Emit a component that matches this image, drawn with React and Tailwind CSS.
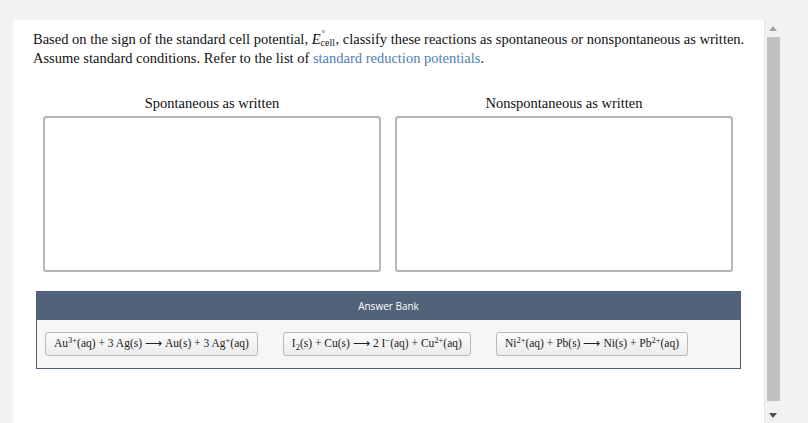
import React from "react";

const serif = { fontFamily: '"Liberation Serif", "Times New Roman", serif' };

// Chemical charge and subscript helpers; preflight supplies the vertical offsets.
function Sup({ children }) {
  return <sup className="text-[8.5px]">{children}</sup>;
}
function Sub({ children }) {
  return <sub className="text-[8.5px]">{children}</sub>;
}

function Tile({ children }) {
  return (
    <div className="h-[24px] px-[8px] flex items-center border border-[#b9b9b9] rounded-[3px] bg-gradient-to-b from-[#fbfbfb] to-[#ececec] text-[11.5px] text-[#222] whitespace-nowrap" style={serif}>
      <span>{children}</span>
    </div>
  );
}

const Arrow = () => <span className="mx-[3px]">⟶</span>;

function DropBox({ label }) {
  return (
    <div className="flex flex-col items-center w-[338px]">
      <div className="text-[14.5px] leading-[18px] text-[#111] h-[22px]" style={serif}>{label}</div>
      <div className="w-[338px] h-[156px] border-2 border-[#b5b5b5] rounded-[3px] bg-white" />
    </div>
  );
}

export default function App() {
  return (
    <div className="w-[808px] h-[423px] bg-[#f2f2f2] overflow-hidden flex pt-[20px] pl-[13px]">
      <div className="w-[751px] h-[403px] bg-white">
        <div className="pl-[20px] pr-[6px] pt-[10px] text-[14.5px] leading-[19px] text-[#111]" style={serif}>
          <p>
            Based on the sign of the standard cell potential,{" "}
            <i>E</i>
            <span className="relative inline-block w-[15px] h-[10px]">
              <span className="absolute left-[1px] -top-[5px] text-[9px] leading-none">°</span>
              <span className="absolute left-0 top-[4px] text-[10px] leading-none">cell</span>
            </span>
            , classify these reactions as spontaneous or nonspontaneous as written.
          </p>
          <p>
            Assume standard conditions. Refer to the list of{" "}
            <span className="text-[#4f7fb5]">standard reduction potentials</span>.
          </p>
        </div>

        <div className="flex gap-[14px] pl-[30px] mt-[26px]">
          <DropBox label="Spontaneous as written" />
          <DropBox label="Nonspontaneous as written" />
        </div>

        <div className="ml-[23px] mt-[19px] w-[705px] border border-[#4f6078]">
          <div className="h-[28px] bg-[#516279] flex items-center justify-center text-white text-[10px]" style={{ fontFamily: '"Open Sans", "Noto Sans", sans-serif' }}>
            Answer Bank
          </div>
          <div className="bg-[#f6f6f6] flex gap-[25px] px-[8px] py-[12px]">
            <Tile>
              Au<Sup>3+</Sup>(aq) + 3 Ag(s)<Arrow />Au(s) + 3 Ag<Sup>+</Sup>(aq)
            </Tile>
            <Tile>
              I<Sub>2</Sub>(s) + Cu(s)<Arrow />2 I<Sup>−</Sup>(aq) + Cu<Sup>2+</Sup>(aq)
            </Tile>
            <Tile>
              Ni<Sup>2+</Sup>(aq) + Pb(s)<Arrow />Ni(s) + Pb<Sup>2+</Sup>(aq)
            </Tile>
          </div>
        </div>
      </div>

      <div className="w-[17px] h-[403px] bg-[#f1f1f1] border-l border-[#e6e6e6] flex flex-col items-center">
        <div className="h-[17px] flex items-center justify-center">
          <svg width="8" height="5" viewBox="0 0 8 5"><path d="M4 0 L8 5 L0 5 Z" fill="#a3a3a3" /></svg>
        </div>
        <div className="w-[13px] h-[364px] bg-[#c1c1c1]" />
        <div className="flex-1 flex items-center justify-center pt-[6px]">
          <svg width="8" height="5" viewBox="0 0 8 5"><path d="M0 0 L8 0 L4 5 Z" fill="#505050" /></svg>
        </div>
      </div>
    </div>
  );
}
